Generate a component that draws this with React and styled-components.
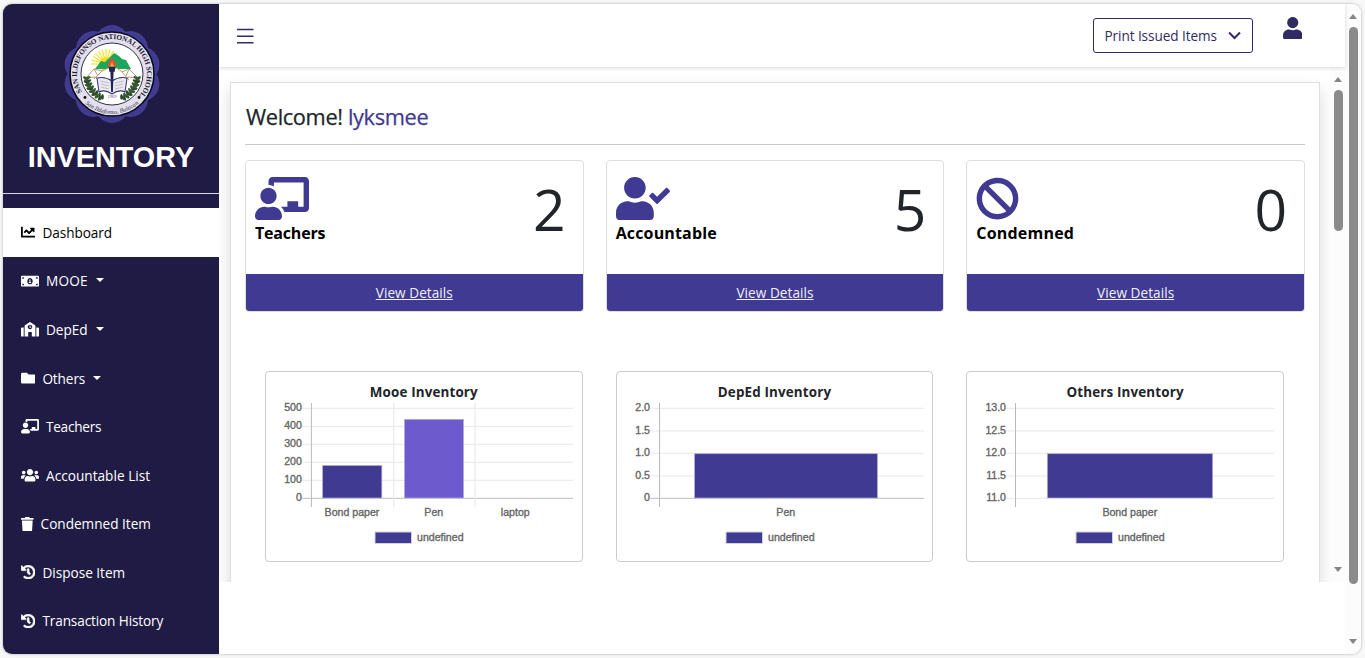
import React from "react";
import styled, { createGlobalStyle } from "styled-components";
import {
  FaChartLine, FaMoneyBillAlt, FaSchool, FaFolder, FaChalkboardTeacher, FaUsers,
  FaTrash, FaHistory, FaUserCheck, FaBan, FaUser,
} from "react-icons/fa";

const navy = "#1f1b44";
const indigo = "#403a92";

const GlobalStyle = createGlobalStyle`
  * { box-sizing: border-box; }
  body {
    margin: 0;
    background: #f7f7f7;
    color: #212529;
    font-family: "Open Sans", "Noto Sans", sans-serif;
  }
`;

const Page = styled.div`
  height: 658px;
  padding: 4px 4px 4px 3px;
  overflow: hidden;
`;

const Frame = styled.div`
  display: flex;
  height: 650px;
  border-radius: 9px;
  overflow: hidden;
  background: #fff;
  box-shadow: 0 0 3px rgba(0, 0, 0, 0.3);
`;

const Sidebar = styled.aside`
  width: 216px;
  flex: none;
  background: ${navy};
  color: #fff;
`;

const Brand = styled.div`
  height: 190px;
  padding-top: 21px;
  border-bottom: 1px solid #d9d8e8;
  display: flex;
  flex-direction: column;
  align-items: center;
  svg { margin-left: 1px; }
`;

const BrandName = styled.div`
  margin-top: 17px;
  font: bold 28.8px/34px "Liberation Sans", sans-serif;
`;

const Menu = styled.nav`
  padding-top: 14px;
`;

const MenuItem = styled.a`
  display: flex;
  align-items: center;
  height: 48.55px;
  padding: 0.3px 0 0 18px;
  font-size: 13.6px;
  letter-spacing: ${(p) => p.$track || 0}px;
  color: ${(p) => (p.$active ? "#000" : "#fff")};
  background: ${(p) => (p.$active ? "#fff" : "transparent")};
  svg {
    flex: none;
    margin-right: 7px;
    stroke: currentColor;
    stroke-width: ${(p) => p.$bold || 0}px;
  }
`;

const Caret = styled.span`
  margin-left: 8px;
  margin-top: -1px;
  border: 4px solid transparent;
  border-top-color: currentColor;
  border-bottom: 0;
`;

const Main = styled.main`
  flex: 1;
  min-width: 0;
`;

const TopBar = styled.header`
  position: relative;
  z-index: 1;
  display: flex;
  align-items: center;
  height: 63px;
  padding: 0 43px 0 18px;
  background: #fff;
  box-shadow: 0 1px 4px rgba(0, 0, 0, 0.16);
`;

const MenuToggle = styled.svg`
  margin: 1px auto 0 0;
`;

const PrintSelect = styled.div`
  display: flex;
  align-items: center;
  justify-content: space-between;
  width: 160px;
  height: 35px;
  padding: 0 11px;
  border: 1px solid #302b63;
  border-radius: 3px;
  color: #302b63;
  font-size: 13.6px;
  letter-spacing: -0.08px;
`;

const Profile = styled(FaUser)`
  margin: -15px 0 0 30px;
  color: #302b63;
`;

const Viewport = styled.div`
  display: flex;
  height: 515px;
  overflow: hidden;
`;

const Content = styled.div`
  flex: 1;
  min-width: 0;
  padding: 15px 10px 0 11px;
  overflow: hidden;
`;

const Panel = styled.section`
  height: 700px;
  padding: 17px 14px;
  background: #fff;
  border: 1px solid #dedede;
  box-shadow: 0 8px 16px rgba(0, 0, 0, 0.15);
`;

const Welcome = styled.h1`
  margin: 0;
  height: 45px;
  border-bottom: 1px solid #c7c8ca;
  font-size: 21.8px;
  line-height: 33px;
  font-weight: 500;
  letter-spacing: -0.37px;
  text-indent: 1px;
  -webkit-text-stroke: 0.25px currentColor;
  span { color: ${indigo}; }
`;

const StatRow = styled.div`
  display: grid;
  grid-template-columns: repeat(3, 1fr);
  gap: 22px;
  margin-top: 15px;
`;

const StatCard = styled.article`
  height: 152px;
  border: 1px solid #dedede;
  border-radius: 4px;
  overflow: hidden;
`;

const StatBody = styled.div`
  display: flex;
  justify-content: space-between;
  height: 113px;
  padding: 16px 17px 0 9px;
  svg { display: block; color: ${indigo}; }
`;

const StatLabel = styled.div`
  margin-top: 2px;
  color: #000;
  font-size: 16px;
  line-height: 23px;
  font-weight: 700;
  letter-spacing: ${(p) => p.$track}px;
`;

const StatValue = styled.div`
  margin-top: 2px;
  font: 400 57px/60px "Open Sans", sans-serif;
`;

const StatLink = styled.a`
  display: flex;
  align-items: center;
  justify-content: center;
  height: 37px;
  background: ${indigo};
  color: #f1f0f8;
  font-size: 13.6px;
  letter-spacing: 0.05px;
  text-decoration: underline;
`;

const ChartRow = styled.div`
  display: grid;
  grid-template-columns: repeat(3, 1fr);
  gap: 33px;
  margin: 59px 21px 0 20px;
`;

const ChartCard = styled.article`
  height: 191px;
  border: 1px solid #cbcbcb;
  border-radius: 4px;
  overflow: hidden;
  svg { display: block; }
`;

const ChartTitle = styled.h2`
  margin: 0;
  height: 30px;
  padding-top: 10px;
  text-align: center;
  font-size: 13.4px;
  line-height: 20px;
  font-weight: 700;
  letter-spacing: 0.15px;
`;

const ChartText = styled.text`
  font: 10.6px "Liberation Sans", sans-serif;
  fill: #666;
  stroke: #666;
  stroke-width: 0.35px;
`;

const Track = styled.div`
  width: ${(p) => p.$width}px;
  flex: none;
  display: flex;
  flex-direction: column;
  align-items: center;
  padding: ${(p) => p.$pad};
  background: #fcfcfc;
`;

const Thumb = styled.div`
  width: 9px;
  height: ${(p) => p.$size}px;
  margin-top: 8px;
  margin-bottom: auto;
  border-radius: 5px;
  background: #8b8b8b;
`;

const Arrow = styled.i`
  border: 4.5px solid transparent;
  ${(p) => (p.$up ? "border-bottom: 5px solid #858585; border-top: 0;" : "border-top: 5px solid #858585; border-bottom: 0;")}
`;

function Scrollbar({ width, pad, size }) {
  return (
    <Track $width={width} $pad={pad}>
      <Arrow $up />
      <Thumb $size={size} />
      <Arrow />
    </Track>
  );
}

function Seal() {
  const petals = Array.from({ length: 10 }, (_, i) => (i * Math.PI) / 5);
  const rays = Array.from({ length: 13 }, (_, i) => Math.PI + (i * Math.PI) / 12);
  const leaves = Array.from({ length: 8 }, (_, i) => i);
  return (
    <svg width="98" height="98" viewBox="-49 -49 98 98">
      <defs>
        <path id="sealTop" d="M-30 18A35 35 0 1 1 25.5 24" />
        <path id="sealBottom" d="M-31 25A39.6 39.6 0 0 0 31 25" />
      </defs>
      {petals.map((a) => (
        <circle key={a} cx={31.4 * Math.sin(a)} cy={-31.4 * Math.cos(a)} r="17" fill={indigo} stroke="#5751a6" strokeWidth=".6" />
      ))}
      <circle r="42" fill="#e3dfee" stroke="#0b0a16" strokeWidth="1.6" />
      <circle r="31" fill="#fff" stroke="#34323f" strokeWidth="1" />
      <g stroke="#f4e52b" strokeWidth="1.2">
        {rays.map((a) => (
          <line key={a} x1="-6" y1="-10" x2={-6 + 15 * Math.cos(a)} y2={-10 + 15 * Math.sin(a)} />
        ))}
      </g>
      <circle cx="-6" cy="-10" r="7" fill="#f7dc24" />
      <path d="M-17-5-11-13-7-12-3-16 2-21 7-18 10-15 14-14 19-5Z" fill="#1ba65c" />
      <path d="M-26 4-18-5-10-3-4-6 5-6 10-2 17-5 26 4M-18-5-14 2M-10-3-18 5M10-2 17 6M17-5 14 2M-25 4-17 3-12 6M25 4 17 3 12 6" fill="#fff" stroke="#b98b62" strokeWidth=".9" />
      <path d="M-15 4-13 18Q-7 15 0 20Q7 15 13 18L15 4Q7 2 0 7Q-7 2-15 4Z" fill="#eceaf0" stroke="#303875" strokeWidth="1.1" />
      <path d="M-12 7-3 9M-11 10-3 12M-11 13-3 15M12 7 3 9M11 10 3 12M11 13 3 15" stroke="#a8a8b5" strokeWidth=".7" />
      {leaves.map((i) => {
        const a = 0.18 + i * 0.135;
        const x = 26.5 * Math.cos(a);
        const y = 26.5 * Math.sin(a);
        return (
          <g key={i} fill={i % 2 ? "#2e4d2c" : "#365b31"}>
            <ellipse cx={x} cy={y} rx="3.4" ry="1.5" transform={`rotate(${-40 + i * 12} ${x} ${y})`} />
            <ellipse cx={x - 2} cy={y - 1} rx="2.8" ry="1.3" transform={`rotate(${20 + i * 10} ${x - 2} ${y - 1})`} />
            <ellipse cx={-x} cy={y} rx="3.4" ry="1.5" transform={`rotate(${40 - i * 12} ${-x} ${y})`} />
            <ellipse cx={2 - x} cy={y - 1} rx="2.8" ry="1.3" transform={`rotate(${-20 - i * 10} ${2 - x} ${y - 1})`} />
          </g>
        );
      })}
      <path d="M-3.5-7H3.5L2.5-2H1.6L.9 18H-.9L-1.6-2H-2.5Z" fill="#202859" />
      <path d="M0-16Q5-11 3.5-7.5H-3.5Q-5-11 0-16Z" fill="#e4512d" />
      <path d="M0-12Q2-9 1.5-7.5H-1.5Q-2-9 0-12Z" fill="#f9a13a" />
      <text x="0" y="23.5" textAnchor="middle" fontSize="4.5" fill="#55535f" fontFamily="Liberation Serif, serif">1969</text>
      <text fontFamily="Liberation Serif, serif" fontWeight="bold" fontSize="7.3" letterSpacing="-0.08" fill="#22202c">
        <textPath href="#sealTop" startOffset="0">SAN ILDEFONSO NATIONAL HIGH SCHOOL</textPath>
      </text>
      <text fontFamily="Liberation Serif, serif" fontStyle="italic" fontSize="6.3" fill="#33313d">
        <textPath href="#sealBottom" startOffset="50%" textAnchor="middle">San Ildefonso, Bulacan</textPath>
      </text>
      <circle cx="-27" cy="23.5" r="1.4" fill="#111" />
      <circle cx="27" cy="23.5" r="1.4" fill="#111" />
    </svg>
  );
}

function BarChart({ axis, end, ticks, bars, splits = [], legend }) {
  const top = 6.4;
  const base = 96.4;
  return (
    <svg width="100%" height="159">
      {ticks.map((t, i) => {
        const y = top + (i * (base - top)) / (ticks.length - 1);
        const last = i === ticks.length - 1;
        return (
          <g key={t}>
            <line x1={axis - 9} x2={end} y1={y} y2={y} stroke={last && t === "0" ? "#c9c9c9" : "#ececec"} strokeWidth="1.3" />
            <ChartText x={axis - 9.5} y={y + 2.7} textAnchor="end">{t}</ChartText>
          </g>
        );
      })}
      {splits.map((x) => (
        <line key={x} x1={x} x2={x} y1="1" y2="105" stroke="#e9e9e9" strokeWidth="1.2" />
      ))}
      <line x1={axis} x2={axis} y1="1" y2="105" stroke="#bababa" />
      {bars.map((b) => (
        <g key={b.name}>
          {b.width > 0 && (
            <rect x={b.x - b.width / 2} y={b.top} width={b.width} height={96 - b.top} fill={b.fill} stroke="#b6b2dc" strokeWidth=".7" />
          )}
          <ChartText x={b.x - 0.2} y="113.8" textAnchor="middle">{b.name}</ChartText>
        </g>
      ))}
      <rect x={legend} y="130" width="36.5" height="11.5" fill={indigo} stroke="#d2d2dc" strokeWidth="1" />
      <ChartText x={legend + 42} y="139.2">undefined</ChartText>
    </svg>
  );
}

const menu = [
  { icon: FaChartLine, label: "Dashboard", active: true, track: -0.05 },
  { icon: FaMoneyBillAlt, label: "MOOE", drop: true, wide: true, track: 0.2 },
  { icon: FaSchool, label: "DepEd", drop: true, wide: true },
  { icon: FaFolder, label: "Others", drop: true, track: -0.1 },
  { icon: FaChalkboardTeacher, label: "Teachers", wide: true, track: -0.25 },
  { icon: FaUsers, label: "Accountable List", wide: true, track: 0.03 },
  { icon: FaTrash, label: "Condemned Item", slim: true },
  { icon: FaHistory, label: "Dispose Item", bold: 22 },
  { icon: FaHistory, label: "Transaction History", bold: 22, track: -0.12 },
];

const stats = [
  { icon: FaChalkboardTeacher, label: "Teachers", value: 2, width: 54, track: -0.2 },
  { icon: FaUserCheck, label: "Accountable", value: 5, width: 54, track: 0.15 },
  { icon: FaBan, label: "Condemned", value: 0, width: 43, track: 0.2 },
];

const charts = [
  {
    title: "Mooe Inventory", axis: 45.4, end: 307, legend: 109, splits: [127.7, 209],
    ticks: ["500", "400", "300", "200", "100", "0"],
    bars: [
      { name: "Bond paper", x: 86.2, width: 59.3, top: 63.4, fill: indigo },
      { name: "Pen", x: 168, width: 59.3, top: 17.3, fill: "#6d5acd" },
      { name: "laptop", x: 249.5, width: 0 },
    ],
  },
  {
    title: "DepEd Inventory", axis: 42.5, end: 307, legend: 109,
    ticks: ["2.0", "1.5", "1.0", "0.5", "0"],
    bars: [{ name: "Pen", x: 169, width: 183, top: 51.7, fill: indigo }],
  },
  {
    title: "Others Inventory", axis: 48.5, end: 307, legend: 109,
    ticks: ["13.0", "12.5", "12.0", "11.5", "11.0"],
    bars: [{ name: "Bond paper", x: 163, width: 165.4, top: 51.7, fill: indigo }],
  },
];

export default function App() {
  return (
    <Page>
      <GlobalStyle />
      <Frame>
        <Sidebar>
          <Brand>
            <Seal />
            <BrandName>INVENTORY</BrandName>
          </Brand>
          <Menu>
            {menu.map(({ icon: Icon, label, active, drop, wide, slim, track, bold }) => (
              <MenuItem key={label} $active={active} $track={track} $bold={bold}>
                <Icon style={{ width: wide ? 18 : slim ? 12.6 : 14.4, height: 14.4 }} />
                {label}
                {drop && <Caret />}
              </MenuItem>
            ))}
          </Menu>
        </Sidebar>
        <Main>
          <TopBar>
            <MenuToggle width="17" height="16" stroke="#302b63" strokeWidth="1.5">
              <path d="M0 1.5H16.5M0 8.2H16.5M0 14.8H16.5" />
            </MenuToggle>
            <PrintSelect>
              Print Issued Items
              <svg width="13" height="9" fill="none" stroke="currentColor" strokeWidth="2">
                <path d="M1 1.5 6.5 7 12 1.5" />
              </svg>
            </PrintSelect>
            <Profile style={{ width: 19.5, height: 22.4 }} />
          </TopBar>
          <Viewport>
            <Content>
              <Panel>
                <Welcome>Welcome! <span>lyksmee</span></Welcome>
                <StatRow>
                  {stats.map(({ icon: Icon, label, value, width, track }) => (
                    <StatCard key={label}>
                      <StatBody>
                        <div>
                          <Icon style={{ width, height: 43.2 }} />
                          <StatLabel $track={track}>{label}</StatLabel>
                        </div>
                        <StatValue>{value}</StatValue>
                      </StatBody>
                      <StatLink>View Details</StatLink>
                    </StatCard>
                  ))}
                </StatRow>
                <ChartRow>
                  {charts.map(({ title, ...chart }) => (
                    <ChartCard key={title}>
                      <ChartTitle>{title}</ChartTitle>
                      <BarChart {...chart} />
                    </ChartCard>
                  ))}
                </ChartRow>
              </Panel>
            </Content>
            <Scrollbar width={15} pad="10px 0 10px 1px" size={141} />
          </Viewport>
        </Main>
        <Scrollbar width={16} pad="10px 0 10px" size={557} />
      </Frame>
    </Page>
  );
}
